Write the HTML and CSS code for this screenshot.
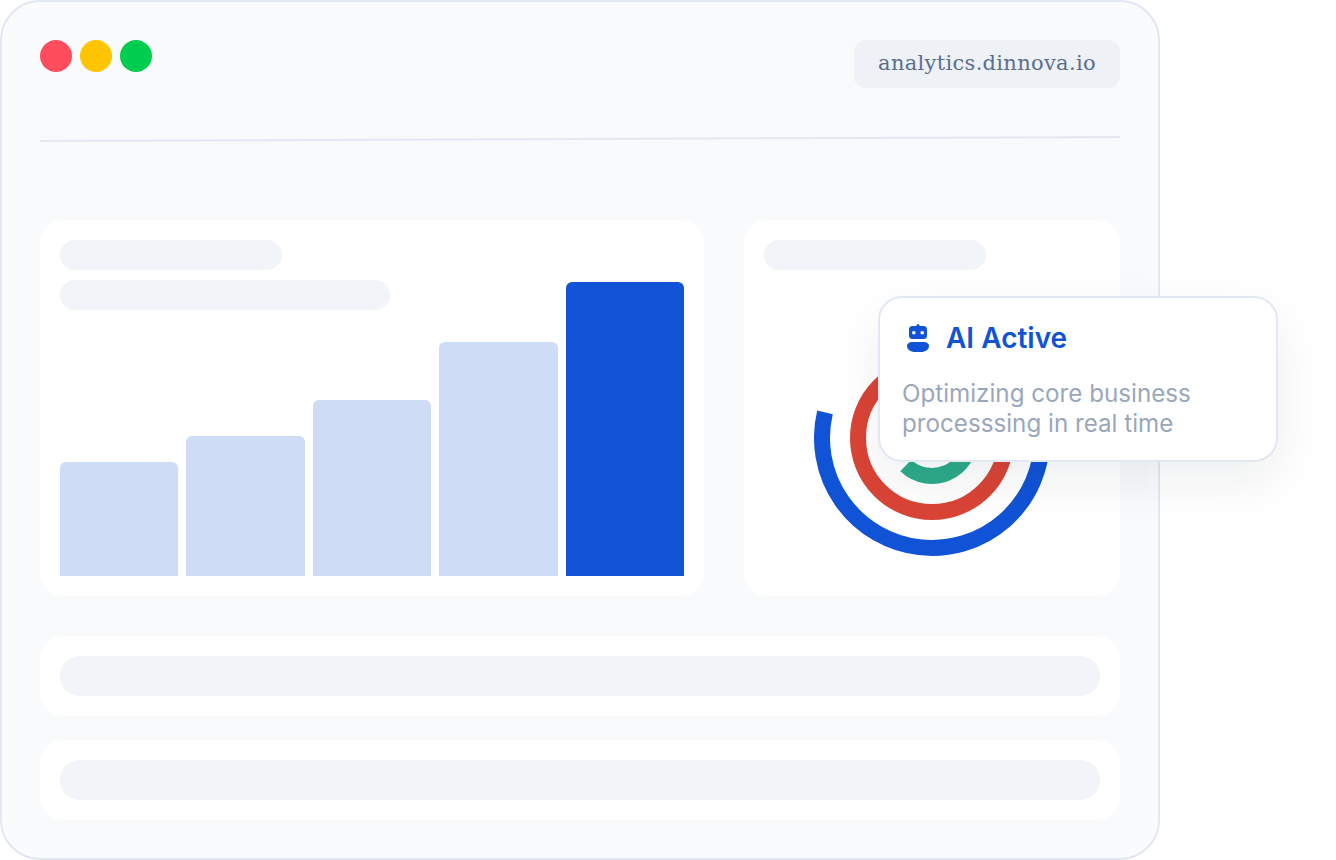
FILE: index.html
```html
<!DOCTYPE html>
<html lang="en">
<head>
  <meta charset="UTF-8">
  <title>Analytics | Dinnova</title>
  <link rel="stylesheet" href="styles.css">
</head>
<body>
  <div class="window">
    <div class="topbar">
      <div class="dots">
        <span class="dot dot-red"></span>
        <span class="dot dot-yellow"></span>
        <span class="dot dot-green"></span>
      </div>
      <div class="address">analytics.dinnova.io</div>
    </div>
    <div class="divider"></div>

    <div class="charts">
      <div class="card card-bars">
        <div class="skeletons">
          <div class="skeleton skeleton-short"></div>
          <div class="skeleton skeleton-long"></div>
        </div>
        <div class="bars">
          <div class="bar bar-1"></div>
          <div class="bar bar-2"></div>
          <div class="bar bar-3"></div>
          <div class="bar bar-4"></div>
          <div class="bar bar-5"></div>
        </div>
      </div>

      <div class="card card-rings">
        <div class="skeleton skeleton-short"></div>
        <svg class="rings" width="236" height="236" viewBox="0 0 236 236" fill="none" stroke-width="16">
          <path stroke="#1153d6" d="M11 92.4 A110 110 0 1 0 228 118"/>
          <path stroke="#d94436" d="M118 44 A74 74 0 1 0 192 118"/>
          <path stroke="#2dab8a" d="M91.800 145.500 A38 38 0 0 0 156 118"/>
        </svg>
      </div>
    </div>

    <div class="row"><div class="row-pill"></div></div>
    <div class="row"><div class="row-pill"></div></div>

    <div class="tooltip">
      <div class="tooltip-title">
        <svg class="bot" width="22" height="28" viewBox="0 0 22 28" fill="#1153d6">
          <circle cx="11" cy="1.500" r="1.500"/>
          <path fill-rule="evenodd" d="M5.500 2h11a3.500 3.500 0 0 1 3.500 3.500v6a3.500 3.500 0 0 1-3.500 3.500h-11A3.500 3.500 0 0 1 2 11.500v-6A3.500 3.500 0 0 1 5.500 2zM6.800 6.900a1.800 1.800 0 1 0 0 3.600 1.800 1.800 0 0 0 0-3.600zM15.200 6.900a1.800 1.800 0 1 0 0 3.600 1.800 1.800 0 0 0 0-3.600z"/>
          <path d="M6 18h10c3.500 0 6 1.500 6 4 0 3.500-3.500 6-8 6H8c-4.500 0-8-2.500-8-6 0-2.500 2.500-4 6-4z"/>
        </svg>
        <span>AI Active</span>
      </div>
      <p class="tooltip-text">Optimizing core business processsing in real time</p>
    </div>
  </div>
</body>
</html>
```

FILE: styles.css
```css
html, body {
  margin: 0;
  padding: 0;
  background: #fff;
}
body {
  height: 860px;
  overflow: hidden;
  font-family: Inter, "Liberation Sans", sans-serif;
}
.window {
  position: relative;
  box-sizing: border-box;
  width: 1160px;
  height: 860px;
  padding: 38px;
  background: #f8fafc;
  border: 2px solid #e1e7f3;
  border-radius: 40px;
  box-shadow: inset 0 0 0 10px rgba(255, 255, 255, 0.3);
}
.topbar {
  display: flex;
  justify-content: space-between;
  align-items: flex-start;
}
.dots {
  display: flex;
  gap: 8px;
}
.dot {
  width: 32px;
  height: 32px;
  border-radius: 50%;
}
.dot-red { background: #ff4d5e; }
.dot-yellow { background: #ffc400; }
.dot-green { background: #00cc4e; }
.address {
  box-sizing: border-box;
  width: 266px;
  height: 48px;
  line-height: 47px;
  text-align: center;
  background: #eef1f6;
  border-radius: 12px;
  color: #5b6f8c;
  font-family: "DejaVu Serif", serif;
  font-size: 21px;
  letter-spacing: 0.3px;
}
.divider {
  height: 2px;
  margin-top: 50px;
  background: #e3e8f2;
  transform: rotate(-0.21deg);
}
.charts {
  display: flex;
  gap: 40px;
  margin-top: 80px;
}
.card {
  box-sizing: border-box;
  height: 376px;
  padding: 20px;
  background: #fff;
  border-radius: 24px;
}
.card-bars {
  display: grid;
  width: 664px;
}
.card-rings {
  display: flex;
  flex-direction: column;
  width: 376px;
}
.skeletons, .bars {
  grid-area: 1 / 1;
}
.skeletons {
  display: flex;
  flex-direction: column;
  gap: 10px;
}
.skeleton {
  height: 30px;
  background: #f1f4f8;
  border-radius: 15px;
}
.skeleton-short { width: 222px; }
.skeleton-long { width: 330px; }
.bars {
  display: flex;
  align-items: flex-end;
  gap: 8px;
}
.bar {
  flex: 1;
  background: #cfdcf5;
  border-radius: 6px 6px 0 0;
}
.bar-1 { height: 114px; }
.bar-2 { height: 140px; }
.bar-3 { height: 176px; }
.bar-4 { height: 234px; }
.bar-5 { height: 294px; background: #1153d6; }
.rings {
  align-self: center;
  margin-top: 50px;
}
.row {
  box-sizing: border-box;
  height: 80px;
  margin-top: 24px;
  padding: 20px;
  background: #fff;
  border-radius: 24px;
}
.charts + .row {
  margin-top: 40px;
}
.row-pill {
  height: 40px;
  background: #f1f4f8;
  border-radius: 20px;
}
.tooltip {
  position: absolute;
  left: 876px;
  top: 294px;
  box-sizing: border-box;
  width: 400px;
  height: 166px;
  padding: 22px;
  background: #fff;
  border: 2px solid #e1e7f3;
  border-radius: 24px;
  box-shadow: 0 20px 50px rgba(15, 23, 42, 0.07);
}
.tooltip-title {
  display: flex;
  align-items: center;
  gap: 17px;
  color: #1153d6;
  font-size: 28px;
  font-weight: 600;
  line-height: 36px;
}
.bot {
  margin-left: 5px;
}
.tooltip-text {
  margin: 23px 0 0;
  color: #9aa7bb;
  font-size: 24.200px;
  line-height: 30px;
}
```
